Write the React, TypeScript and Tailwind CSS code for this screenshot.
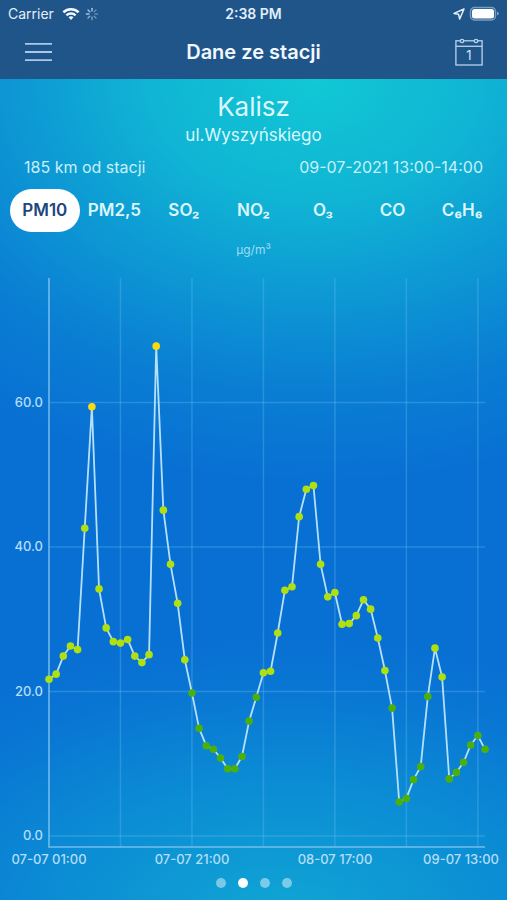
import { useState } from "react";

const READINGS = [
  21.7, 22.4, 24.9, 26.3, 25.8, 42.6, 59.4, 34.2, 28.8, 26.9, 26.7, 27.2, 24.9, 24.0, 25.1, 67.8,
  45.1, 37.6, 32.2, 24.4, 19.8, 14.9, 12.5, 12.0, 10.8, 9.3, 9.3, 11.0, 15.9, 19.2, 22.6, 22.8,
  28.1, 34.0, 34.5, 44.2, 48.0, 48.5, 37.6, 33.1, 33.7, 29.3, 29.4, 30.5, 32.7, 31.4, 27.4, 22.9,
  17.7, 4.7, 5.2, 7.8, 9.6, 19.3, 26.0, 22.0, 7.9, 8.8, 10.2, 12.6, 13.9, 12.0,
];

const POLLUTANTS = ["PM10", "PM2,5", "SO₂", "NO₂", "O₃", "CO", "C₆H₆"];
const PAGES = ["Strona 1", "Strona 2", "Strona 3", "Strona 4"];

/* Plot area in chart units */
const LEFT = 49;
const RIGHT = 485;
const TOP = 8;
const BOTTOM = 577;
const ZERO = 566;
const UNIT = 7.225;

const xAt = (i: number) => LEFT + (i * (RIGHT - LEFT)) / (READINGS.length - 1);
const yAt = (v: number) => ZERO - v * UNIT;
const dotColor = (v: number) => (v > 50 ? "#fbda12" : v > 20 ? "#b0e010" : "#4cb00c");

function StatusBar() {
  return (
    <div className="grid h-7 grid-cols-3 items-center px-2 text-sm text-[#e3eefa]">
      <div className="flex items-center gap-1">
        <span>Carrier</span>
        <svg className="ml-1 h-4 w-[18px]" viewBox="0 0 20 16" fill="none" stroke="#f4f9ff" strokeWidth="2.8">
          <path d="M1.500 6.100a12.400 12.400 0 0 1 17 0" />
          <path d="M4.900 9.500a7.500 7.500 0 0 1 10.200 0" />
          <path d="M10 10.600c-1.100 0-2 .4-2.700 1L10 14.600l2.700-3c-.7-.6-1.600-1-2.700-1z" fill="#f4f9ff" stroke="none" />
        </svg>
        <svg className="size-4" viewBox="0 0 16 16" stroke="#c6dcf0" strokeWidth="1.300" strokeLinecap="round">
          <path d="M8 2.300v2.800" opacity=".9" />
          <path d="M12 4l-1.900 1.900" opacity=".45" />
          <path d="M13.700 8h-2.800" opacity=".4" />
          <path d="M12 12l-1.900-1.900" opacity=".5" />
          <path d="M8 13.700v-2.800" opacity=".6" />
          <path d="M4 12l1.900-1.900" opacity=".7" />
          <path d="M2.300 8h2.800" opacity=".8" />
          <path d="M4 4l1.900 1.900" opacity=".9" />
        </svg>
      </div>
      <span className="text-center font-semibold">2:38 PM</span>
      <div className="flex items-center justify-end gap-1">
        <svg className="size-3" viewBox="0 0 12 12" fill="none" stroke="#e3eefa" strokeWidth="1.500" strokeLinejoin="round">
          <path d="M11 1L1 5.400l4.600.9L6.700 11z" />
        </svg>
        <svg className="h-4 w-[30px]" viewBox="0 0 30 16">
          <rect x="1.500" y="1.500" width="25" height="12.500" rx="4" fill="none" stroke="#7b9dc2" strokeWidth="1.500" />
          <rect x="3" y="3" width="22" height="9.500" rx="2.500" fill="#fff" />
          <path d="M28 5.500c1.400.5 1.900 1.200 1.900 2s-.5 1.500-1.900 2z" fill="#7b9dc2" />
        </svg>
      </div>
    </div>
  );
}

function NavBar() {
  return (
    <div className="flex h-[51px] items-center justify-between px-6 pb-1">
      <button type="button" aria-label="Menu" className="h-7 w-7">
        <svg className="size-7" viewBox="0 0 28 28" stroke="#a9c8ea" strokeWidth="1.800">
          <path d="M1 5.800h27M1 14h27M1 22.200h27" />
        </svg>
      </button>
      <h1 className="text-xl font-semibold text-[#f2f8ff]">Dane ze stacji</h1>
      <button type="button" aria-label="Kalendarz" className="h-7 w-7">
        <svg className="size-7" viewBox="0 0 28 28" fill="none" stroke="#b9d3ee" strokeWidth="1.300">
          <rect x=".9" y="2.800" width="26.200" height="24.200" />
          <path d="M1 8.300h26" />
          <circle cx="7" cy="3" r="1.700" fill="#1f5589" />
          <circle cx="21" cy="3" r="1.700" fill="#1f5589" />
          <text x="14" y="22" textAnchor="middle" fontSize="13" fill="#d5e6f7" stroke="none">
            1
          </text>
        </svg>
      </button>
    </div>
  );
}

function Chart() {
  const line = READINGS.map((v, i) => `${xAt(i)},${yAt(v)}`).join(" ");
  return (
    <svg className="block w-full" viewBox="0 0 507 602" role="img" aria-label="PM10">
      <g stroke="#6cc4f5" strokeOpacity=".3" strokeWidth="1.500">
        {[10, 20, 30, 40, 50, 60].map((i) => (
          <line key={i} x1={xAt(i)} x2={xAt(i)} y1={TOP} y2={BOTTOM} />
        ))}
        {[0, 20, 40, 60].map((v) => (
          <line key={v} x1={LEFT} x2={RIGHT} y1={yAt(v)} y2={yAt(v)} />
        ))}
      </g>
      <path d={`M${LEFT} ${TOP}V${BOTTOM}H${RIGHT}`} fill="none" stroke="#8cc8f2" strokeOpacity=".8" strokeWidth="1.600" />
      <polyline points={line} fill="none" stroke="#b5e0fc" strokeWidth="1.800" strokeLinejoin="round" />
      {READINGS.map((v, i) => (
        <circle key={i} cx={xAt(i)} cy={yAt(v)} r="3.800" fill={dotColor(v)} />
      ))}
      <g fill="#b4def9" fontSize="13" fontWeight="500">
        {[0, 20, 40, 60].map((v) => (
          <text key={v} x="43" y={yAt(v) + 4} textAnchor="end">
            {v.toFixed(1)}
          </text>
        ))}
        <text x="49" y="594" textAnchor="middle">07-07 01:00</text>
        <text x="192" y="594" textAnchor="middle">07-07 21:00</text>
        <text x="335" y="594" textAnchor="middle">08-07 17:00</text>
        <text x="461" y="594" textAnchor="middle">09-07 13:00</text>
      </g>
    </svg>
  );
}

export default function App() {
  const [active, setActive] = useState("PM10");
  const [page, setPage] = useState(1);

  return (
    <div className="flex min-h-screen flex-col bg-[#086fd3] font-['Inter','Liberation_Sans',sans-serif]">
      <header className="bg-[#1f5589]">
        <StatusBar />
        <NavBar />
      </header>
      <main className="flex grow flex-col bg-[radial-gradient(ellipse_110%_50%_at_62%_0%,#11c8d4_0%,#10b4d4_30%,#0d97d4_54%,#0a7ed3_76%,#086fd300_100%),radial-gradient(ellipse_100%_35%_at_56%_102%,#10a6d4_0%,#0b8ad4_50%,#0976d3_80%,#086fd300_100%)]">
        <div className="flex flex-col items-center pt-3 text-[#dcf6fc]">
          <h2 className="text-[26px] leading-8">Kalisz</h2>
          <p className="text-[17px] leading-6">ul.Wyszyńskiego</p>
        </div>
        <div className="flex justify-between px-6 pt-2 text-base leading-6 text-[#c8effa]">
          <span>185 km od stacji</span>
          <span>09-07-2021 13:00-14:00</span>
        </div>
        <div className="grid grid-cols-7 px-2.5 pt-2.5">
          {POLLUTANTS.map((name) => (
            <button
              key={name}
              type="button"
              aria-pressed={active === name}
              onClick={() => setActive(name)}
              className={`h-[43px] rounded-full text-[17px] font-semibold ${
                active === name ? "bg-white text-[#20457f]" : "text-[#dcf6fc]"
              }`}
            >
              {name}
            </button>
          ))}
        </div>
        <p className="pt-2.5 pb-3 text-center text-xs leading-4 text-[#9edcf3]">µg/m³</p>
        <Chart />
        <nav className="flex justify-center gap-3 pt-1.5" aria-label="Strony">
          {PAGES.map((label, i) => (
            <button
              key={label}
              type="button"
              aria-label={label}
              aria-current={page === i}
              onClick={() => setPage(i)}
              className={`size-2.5 rounded-full ${page === i ? "bg-white" : "bg-white/45"}`}
            />
          ))}
        </nav>
      </main>
    </div>
  );
}
